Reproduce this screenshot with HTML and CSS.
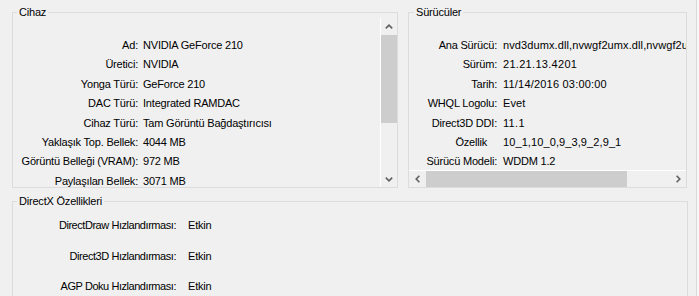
FILE: index.html
```html
<!DOCTYPE html>
<html>
<head>
  <title>DirectX Tanı Aracı - Ekran</title>
  <link rel="stylesheet" href="styles.css">
</head>
<body>

  <div class="window">

    <!-- Cihaz + Sürücüler -->
    <div class="top">
      <fieldset class="device">
        <legend>Cihaz</legend>
        <div class="pane">
          <div class="list">
            <span class="label">Ad:</span><span class="value">NVIDIA GeForce 210</span>
            <span class="label">Üretici:</span><span class="value">NVIDIA</span>
            <span class="label">Yonga Türü:</span><span class="value">GeForce 210</span>
            <span class="label">DAC Türü:</span><span class="value">Integrated RAMDAC</span>
            <span class="label">Cihaz Türü:</span><span class="value">Tam Görüntü Bağdaştırıcısı</span>
            <span class="label">Yaklaşık Top. Bellek:</span><span class="value">4044 MB</span>
            <span class="label">Görüntü Belleği (VRAM):</span><span class="value">972 MB</span>
            <span class="label">Paylaşılan Bellek:</span><span class="value">3071 MB</span>
          </div>
          <div class="vscroll">
            <div class="arrow">
              <svg width="8" height="5" viewBox="0 0 8 5"><path d="M0.8 4.4 L4 1.2 L7.2 4.4" /></svg>
            </div>
            <div class="vthumb"></div>
            <div class="track"></div>
            <div class="arrow">
              <svg width="8" height="5" viewBox="0 0 8 5"><path d="M0.8 0.6 L4 3.8 L7.2 0.6" /></svg>
            </div>
          </div>
        </div>
      </fieldset>

      <fieldset class="drivers">
        <legend>Sürücüler</legend>
        <div class="pane column">
          <div class="list">
            <span class="label">Ana Sürücü:</span><span class="value">nvd3dumx.dll,nvwgf2umx.dll,nvwgf2umx.dll,nvd3dum</span>
            <span class="label">Sürüm:</span><span class="value num">21.21.13.4201</span>
            <span class="label">Tarih:</span><span class="value num wide">11/14/2016 03:00:00</span>
            <span class="label">WHQL Logolu:</span><span class="value">Evet</span>
            <span class="label">Direct3D DDI:</span><span class="value num">11.1</span>
            <span class="label short">Özellik</span><span class="value">10_1,10_0,9_3,9_2,9_1</span>
            <span class="label">Sürücü Modeli:</span><span class="value plain">WDDM 1.2</span>
          </div>
          <div class="hscroll">
            <div class="arrow">
              <svg width="5" height="8" viewBox="0 0 5 8"><path d="M4.4 0.8 L1.2 4 L4.4 7.2" /></svg>
            </div>
            <div class="hthumb"></div>
            <div class="track"></div>
            <div class="arrow">
              <svg width="5" height="8" viewBox="0 0 5 8"><path d="M0.6 0.8 L3.8 4 L0.6 7.2" /></svg>
            </div>
          </div>
        </div>
      </fieldset>
    </div>

    <!-- DirectX Özellikleri -->
    <fieldset class="features">
      <legend>DirectX Özellikleri</legend>
      <div class="feature-list">
        <span class="label">DirectDraw Hızlandırması:</span><span class="value">Etkin</span>
        <span class="label">Direct3D Hızlandırması:</span><span class="value">Etkin</span>
        <span class="label">AGP Doku Hızlandırması:</span><span class="value">Etkin</span>
      </div>
    </fieldset>

  </div>

</body>
</html>
```

FILE: styles.css
```css
* {
  box-sizing: border-box;
}

html {
  background-color: #f7f7f7;
}

body {
  margin: 0;
  font-family: "Liberation Sans", Arial, sans-serif;
  font-size: 11px;
  letter-spacing: -0.2px;
  color: #000;
}

.window {
  width: 697px;
  height: 296px;
  padding: 6px 0 0 12px;
  background-color: #f0f0f0;
  border-right: 1px solid #d9d9d9;
  overflow: hidden;
}

fieldset {
  margin: 0;
  padding: 0;
  min-width: 0;
  border: 1px solid #dcdcdc;
}

legend {
  margin-left: 4px;
  padding: 0 2px;
  line-height: 13px;
}

.top {
  display: flex;
  gap: 10px;
}

.device {
  width: 386px;
  height: 182px;
}

.drivers {
  width: 279px;
  height: 182px;
}

.drivers legend {
  margin-left: 5px;
}

.pane {
  display: flex;
  height: 168px;
}

.pane.column {
  flex-direction: column;
}

.list {
  flex: 1;
  min-width: 0;
  display: grid;
  grid-template-columns: 125px max-content;
  grid-auto-rows: 19.4px;
  align-items: center;
  column-gap: 5px;
  align-content: start;
  padding-top: 16.3px;
  overflow: hidden;
}

.drivers .list {
  grid-template-columns: 88px max-content;
  column-gap: 6px;
}

.label {
  text-align: right;
  white-space: nowrap;
}

.label.short {
  padding-right: 10px;
}

.value {
  white-space: nowrap;
}

/* driver values are drawn a little looser than the rest */
.drivers .value {
  letter-spacing: 0.1px;
}

.drivers .value.num {
  letter-spacing: 0.3px;
}

.drivers .value.wide {
  letter-spacing: 0.2px;
}

.drivers .value.plain {
  letter-spacing: -0.2px;
}

/* scrollbars */
.vscroll {
  align-self: flex-start;
  display: flex;
  flex-direction: column;
  width: 17px;
  height: 169px;
  margin-top: -1px;
  border-left: 1px solid #fff;
}

.hscroll {
  display: flex;
  height: 17px;
  border-top: 1px solid #fff;
}

.arrow {
  display: flex;
  align-items: center;
  justify-content: center;
  flex: 0 0 16px;
}

.vscroll .arrow {
  height: 16px;
}

.vscroll .arrow:first-child,
.hscroll .arrow:first-child {
  flex-basis: 17px;
}

.arrow path {
  fill: none;
  stroke: #606060;
  stroke-width: 1.6;
}

.vthumb {
  height: 88px;
  background-color: #cdcdcd;
}

.hthumb {
  width: 201px;
  background-color: #cdcdcd;
}

.track {
  flex: 1;
}

.features {
  width: 676px;
  height: 120px;
  margin-top: 7px;
}

.feature-list {
  display: grid;
  grid-template-columns: 163px max-content;
  grid-auto-rows: 30.5px;
  align-items: center;
  column-gap: 12px;
  padding-top: 2px;
}

.feature-list .label {
  letter-spacing: -0.45px;
}
```
